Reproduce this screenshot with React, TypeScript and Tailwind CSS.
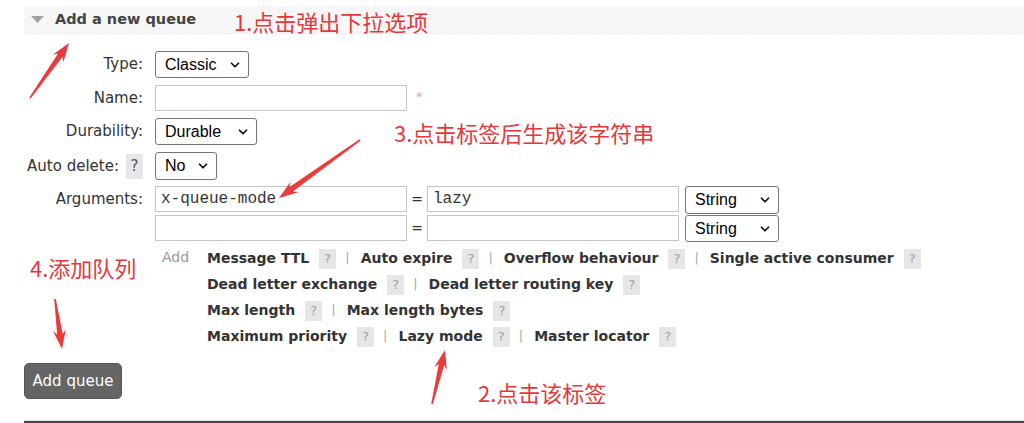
import { ChevronDown } from "lucide-react";

const sans = "font-['DejaVu_Sans',sans-serif]";
const cjk = "font-['Noto_Sans_CJK_SC',sans-serif]";

type Pt = [number, number];

// tapered red arrow, tail -> tip
function arrowPoints(tail: Pt, tip: Pt) {
  const dx = tip[0] - tail[0];
  const dy = tip[1] - tail[1];
  const len = Math.hypot(dx, dy);
  const ux = dx / len;
  const uy = dy / len;
  const nx = -uy;
  const ny = ux;
  const at = (d: number, w: number): string =>
    `${tip[0] - ux * d + nx * w},${tip[1] - uy * d + ny * w}`;
  return [
    at(len, 0.8),
    at(15, 2.8),
    at(19, 6.5),
    at(0, 0),
    at(19, -6.5),
    at(15, -2.8),
    at(len, -0.8),
  ].join(" ");
}

const arrows: [Pt, Pt][] = [
  [[30, 98], [69, 43]],
  [[360, 140], [279, 198]],
  [[55, 299], [62, 349]],
  [[432, 404], [445, 350]],
];

function Help({ tall }: { tall?: boolean }) {
  return (
    <span
      className={`inline-flex w-[17px] items-center justify-center bg-[#e6e6e6] ${
        tall ? "h-[25px] text-[15px] text-[#555]" : "h-[20px] text-[13px] text-[#a0a0a0]"
      }`}
    >
      ?
    </span>
  );
}

function Select({ value, width }: { value: string; width: string }) {
  return (
    <div
      className={`flex h-full items-center justify-between rounded-[3px] border border-[#767676] bg-white pl-[9px] pr-[6px] font-['Liberation_Sans',sans-serif] text-[16px] text-black ${width}`}
    >
      <span>{value}</span>
      <ChevronDown size={14} strokeWidth={3} className="text-[#111]" />
    </div>
  );
}

function Input({ value }: { value?: string }) {
  return (
    <div className="flex h-full w-[252px] items-center border border-[#c5c5c5] bg-white pl-[5px] font-['Liberation_Mono',monospace] text-[16px] text-[#333]">
      {value}
    </div>
  );
}

function Label({ children }: { children: React.ReactNode }) {
  return (
    <div className="mr-[12px] flex w-[119px] shrink-0 items-center justify-end gap-[7px] text-[15px] text-[#333]">
      {children}
    </div>
  );
}

const linkRows = [
  ["Message TTL", "Auto expire", "Overflow behaviour", "Single active consumer"],
  ["Dead letter exchange", "Dead letter routing key"],
  ["Max length", "Max length bytes"],
  ["Maximum priority", "Lazy mode", "Master locator"],
];

export default function App() {
  return (
    <div className={`relative h-[423px] w-[1024px] overflow-hidden bg-white ${sans}`}>
      <div className="ml-[24px]">
        {/* Section header */}
        <div className="mt-[6px] flex h-[28px] items-center border-b border-dashed border-[#ececec] bg-[#f6f6f6]">
          <svg width="13" height="7" viewBox="0 0 13 7" className="ml-[7px]">
            <polygon points="0,0 13,0 6.5,7" fill="#a3a3a3" />
          </svg>
          <span className="ml-[11px] text-[14.5px] font-bold text-[#444]">Add a new queue</span>
        </div>

        {/* Form */}
        <div className="mt-[17px] flex flex-col">
          <div className="flex h-[27px]">
            <Label>Type:</Label>
            <Select value="Classic" width="w-[94px]" />
          </div>
          <div className="mt-[7px] flex h-[26px]">
            <Label>Name:</Label>
            <Input />
            <span className="ml-[9px] mt-[2px] text-[13px] text-[#e8a2ad]">*</span>
          </div>
          <div className="mt-[7px] flex h-[27px]">
            <Label>Durability:</Label>
            <Select value="Durable" width="w-[102px]" />
          </div>
          <div className="mt-[7px] flex h-[28px]">
            <Label>
              <span>Auto delete:</span>
              <Help tall />
            </Label>
            <Select value="No" width="w-[62px]" />
          </div>
          <div className="mt-[6px] flex h-[26px]">
            <Label>Arguments:</Label>
            <Input value="x-queue-mode" />
            <span className="flex w-[20px] items-center justify-center text-[14px] text-[#333]">=</span>
            <Input value="lazy" />
            <div className="ml-[6px] h-[28px]">
              <Select value="String" width="w-[94px]" />
            </div>
          </div>
          <div className="mt-[3px] flex h-[26px]">
            <Label>{null}</Label>
            <Input />
            <span className="flex w-[20px] items-center justify-center text-[14px] text-[#333]">=</span>
            <Input />
            <div className="ml-[6px] h-[27px]">
              <Select value="String" width="w-[94px]" />
            </div>
          </div>

          {/* Argument shortcuts */}
          <div className="mt-[4px] flex pl-[138px]">
            <div className="w-[45px] pt-[2px] text-[14px] text-[#999]">Add</div>
            <div className="flex flex-col">
              {linkRows.map((row, i) => (
                <div key={i} className="flex h-[26px] items-center">
                  {row.map((item, j) => (
                    <div key={item} className="flex items-center">
                      <span className="text-[14px] font-bold text-[#333]">{item}</span>
                      <span className="ml-[10px]">
                        <Help />
                      </span>
                      {j < row.length - 1 && (
                        <span className="ml-[9px] mr-[11px] text-[13px] text-[#aaa]">|</span>
                      )}
                    </div>
                  ))}
                </div>
              ))}
            </div>
          </div>
        </div>

        <button className="mt-[14px] h-[36px] w-[98px] rounded-[5px] border border-[#555] bg-[#656565] text-[15px] text-white">
          Add queue
        </button>

        <div className="mt-[21px] border-t border-[#e4e4e4]" />
        <div className="h-[2px] bg-[#444]" />
      </div>

      {/* Annotations */}
      <div className={`absolute left-[234px] top-[10px] text-[22px] leading-none text-[#e5383b] ${cjk}`}>
        1.点击弹出下拉选项
      </div>
      <div className={`absolute left-[394px] top-[121px] text-[22px] leading-none text-[#e5383b] ${cjk}`}>
        3.点击标签后生成该字符串
      </div>
      <div className={`absolute left-[30px] top-[256px] text-[22px] leading-none text-[#e5383b] ${cjk}`}>
        4.添加队列
      </div>
      <div className={`absolute left-[478px] top-[381px] text-[22px] leading-none text-[#e5383b] ${cjk}`}>
        2.点击该标签
      </div>
      <svg className="pointer-events-none absolute inset-0" width="1024" height="423">
        {arrows.map(([tail, tip], i) => (
          <polygon key={i} points={arrowPoints(tail, tip)} fill="#ee3a3a" />
        ))}
      </svg>
    </div>
  );
}
